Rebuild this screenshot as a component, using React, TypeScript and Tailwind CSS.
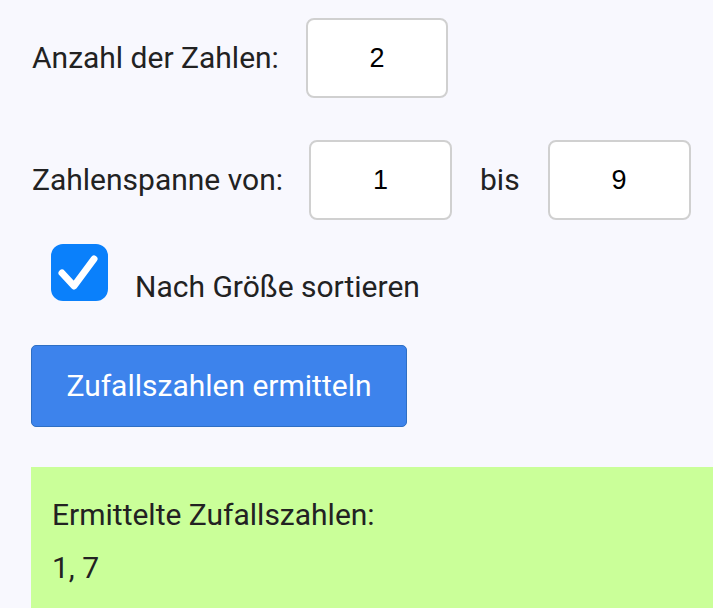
import { useState } from "react";

const inputCls =
  "h-[80px] rounded-lg border-2 border-[#d0d0d0] bg-white text-center text-[27px] text-black font-['Liberation_Sans',Arial,sans-serif] outline-none";

export default function App() {
  const [sorted, setSorted] = useState(true);

  return (
    <div className="min-h-screen overflow-hidden bg-[#f8f8fe] pl-[31px] pt-[18px] text-[30px] leading-[36px] text-[#222] font-['Roboto',sans-serif]">
      {/* Anzahl */}
      <div className="flex items-center">
        <label className="ml-px mr-[27px]">Anzahl der Zahlen:</label>
        <input defaultValue="2" className={`${inputCls} w-[142px]`} />
      </div>

      {/* Spanne */}
      <div className="mt-[42px] flex items-center">
        <label className="ml-px mr-[26px]">Zahlenspanne von:</label>
        <input defaultValue="1" className={`${inputCls} w-[143px]`} />
        <span className="mx-[28px]">bis</span>
        <input defaultValue="9" className={`${inputCls} w-[143px]`} />
      </div>

      {/* Checkbox */}
      <div className="mt-[24px] flex h-[57px] items-start pl-[20px]">
        <button
          onClick={() => setSorted(!sorted)}
          className={`flex h-[57px] w-[57px] shrink-0 items-center justify-center rounded-[12px] ${
            sorted ? "bg-[#0a80fb]" : "border-2 border-[#bbb] bg-white"
          }`}
        >
          {sorted && (
            <svg viewBox="0 0 57 57" className="h-[57px] w-[57px]">
              <path
                d="M11 29 L23 42 L43 15"
                fill="none"
                stroke="white"
                strokeWidth="7"
                strokeLinecap="round"
                strokeLinejoin="round"
              />
            </svg>
          )}
        </button>
        <span className="ml-[27px] mt-[25px]">Nach Größe sortieren</span>
      </div>

      {/* Button */}
      <button className="mt-[44px] block h-[82px] w-[376px] rounded-[5px] border border-[#2e6fc4] bg-[#3d83ec] text-[30px] text-white">
        Zufallszahlen ermitteln
      </button>

      {/* Ergebnis */}
      <div className="mt-[40px] h-[160px] bg-[#caff99] px-[21px] pt-[30px]">
        <p>Ermittelte Zufallszahlen:</p>
        <p className="mt-[17px]">1, 7</p>
      </div>
    </div>
  );
}
